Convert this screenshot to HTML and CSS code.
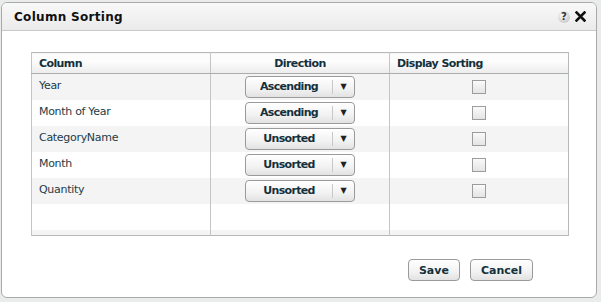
FILE: index.html
```html
<!DOCTYPE html>
<html lang="en">
<head>
  <meta charset="UTF-8">
  <title>Column Sorting</title>
  <link rel="stylesheet" href="styles.css">
</head>
<body>
  <div class="dialog">
    <div class="dialog-title">
      <span class="title-text">Column Sorting</span>
      <span class="title-icons">
        <span class="help-icon">?</span>
        <svg class="close-icon" width="11" height="11" viewBox="0 0 11 11">
          <path d="M1.5 1.5 L9.5 9.5 M9.5 1.5 L1.5 9.5" stroke="#111" stroke-width="2.6" stroke-linecap="square"/>
        </svg>
      </span>
    </div>

    <div class="dialog-body">
      <table class="sort-table">
        <thead>
          <tr>
            <th>Column</th>
            <th class="center">Direction</th>
            <th>Display Sorting</th>
          </tr>
        </thead>
        <tbody>
          <tr class="alt">
            <td>Year</td>
            <td class="center"><span class="dropdown"><span class="dd-label">Ascending</span><span class="dd-arrow">&#9660;</span></span></td>
            <td class="center"><span class="checkbox"></span></td>
          </tr>
          <tr>
            <td>Month of Year</td>
            <td class="center"><span class="dropdown"><span class="dd-label">Ascending</span><span class="dd-arrow">&#9660;</span></span></td>
            <td class="center"><span class="checkbox"></span></td>
          </tr>
          <tr class="alt">
            <td>CategoryName</td>
            <td class="center"><span class="dropdown"><span class="dd-label">Unsorted</span><span class="dd-arrow">&#9660;</span></span></td>
            <td class="center"><span class="checkbox"></span></td>
          </tr>
          <tr>
            <td>Month</td>
            <td class="center"><span class="dropdown"><span class="dd-label">Unsorted</span><span class="dd-arrow">&#9660;</span></span></td>
            <td class="center"><span class="checkbox"></span></td>
          </tr>
          <tr class="alt">
            <td>Quantity</td>
            <td class="center"><span class="dropdown"><span class="dd-label">Unsorted</span><span class="dd-arrow">&#9660;</span></span></td>
            <td class="center"><span class="checkbox"></span></td>
          </tr>
          <tr>
            <td></td>
            <td></td>
            <td></td>
          </tr>
          <tr class="alt filler">
            <td></td>
            <td></td>
            <td></td>
          </tr>
        </tbody>
      </table>

      <div class="dialog-buttons">
        <button class="btn">Save</button>
        <button class="btn">Cancel</button>
      </div>
    </div>
  </div>
</body>
</html>
```

FILE: styles.css
```css
body {
  margin: 0;
  background-color: #e9ecea;
  font-family: 'DejaVu Sans', Verdana, sans-serif;
  font-size: 11px;
  color: #1d3b47;
}
.dialog {
  width: 594px;
  height: 294px;
  margin: 2px 0 0 1px;
  background-color: #fff;
  border: 1px solid #a9a9a9;
  border-radius: 6px;
  overflow: hidden;
  display: flex;
  flex-direction: column;
}
.dialog-title {
  height: 27px;
  flex: none;
  display: flex;
  align-items: center;
  justify-content: space-between;
  padding: 0 10px 0 12px;
  background: linear-gradient(#f8f8f8, #ebebeb);
  border-bottom: 1px solid #c9c9c9;
  font-weight: bold;
  color: #111;
}
.title-text {
  font-size: 12px;
  letter-spacing: 0.3px;
}
.title-icons {
  display: flex;
  align-items: center;
  gap: 5px;
}
.help-icon {
  width: 12px;
  height: 12px;
  border-radius: 50%;
  background: radial-gradient(circle at 40% 35%, #fdfdfd, #b9b9b9);
  font-size: 10px;
  line-height: 12px;
  text-align: center;
  color: #333;
}
.dialog-body {
  flex: 1;
  padding: 21px 29px 0 29px;
  display: flex;
  flex-direction: column;
}
.sort-table {
  width: 538px;
  border-collapse: collapse;
  table-layout: fixed;
  border: 1px solid #b5b9b8;
}
.sort-table th {
  height: 20px;
  padding: 0 7px;
  text-align: left;
  font-weight: bold;
  letter-spacing: -0.6px;
  color: #13303c;
  background: linear-gradient(#fcfcfc 40%, #ececec);
  border-bottom: 1px solid #a9aeac;
  border-left: 1px solid #c4c4c4;
}
.sort-table td {
  height: 26px;
  padding: 0 7px;
  border-left: 1px solid #c4c4c4;
  vertical-align: top;
  line-height: 24px;
  letter-spacing: -0.3px;
}
.sort-table .center {
  text-align: center;
}
.sort-table tr.alt td {
  background-color: #f4f4f4;
}
.sort-table tr.filler td {
  height: 5px;
  line-height: 5px;
}
.dropdown {
  display: inline-flex;
  align-items: center;
  width: 108px;
  height: 20px;
  margin-top: 2px;
  border: 1px solid #9a9a9a;
  border-radius: 4px;
  background: linear-gradient(#ffffff, #f2f2f2 60%, #e2e2e2);
  font-weight: bold;
  letter-spacing: -0.7px;
  color: #13303c;
  line-height: 20px;
  vertical-align: top;
}
.dd-label {
  flex: 1;
  text-align: center;
  border-right: 1px solid #c8c8c8;
  height: 14px;
  line-height: 14px;
}
.dd-arrow {
  width: 21px;
  font-size: 8px;
  letter-spacing: 0;
  text-align: center;
  color: #222;
}
.checkbox {
  display: inline-block;
  width: 12px;
  height: 12px;
  margin-top: 6px;
  border: 1px solid #9c9c9c;
  background: linear-gradient(#fafafa, #e4e4e4);
  vertical-align: top;
}
.dialog-buttons {
  display: flex;
  justify-content: flex-end;
  gap: 10px;
  padding: 23px 34px 0 0;
}
.btn {
  height: 22px;
  padding: 0 10px;
  font-family: 'DejaVu Sans', Verdana, sans-serif;
  font-size: 11px;
  font-weight: bold;
  color: #13303c;
  border: 1px solid #9a9a9a;
  border-radius: 4px;
  background: linear-gradient(#ffffff, #f2f2f2 60%, #e2e2e2);
}
```
